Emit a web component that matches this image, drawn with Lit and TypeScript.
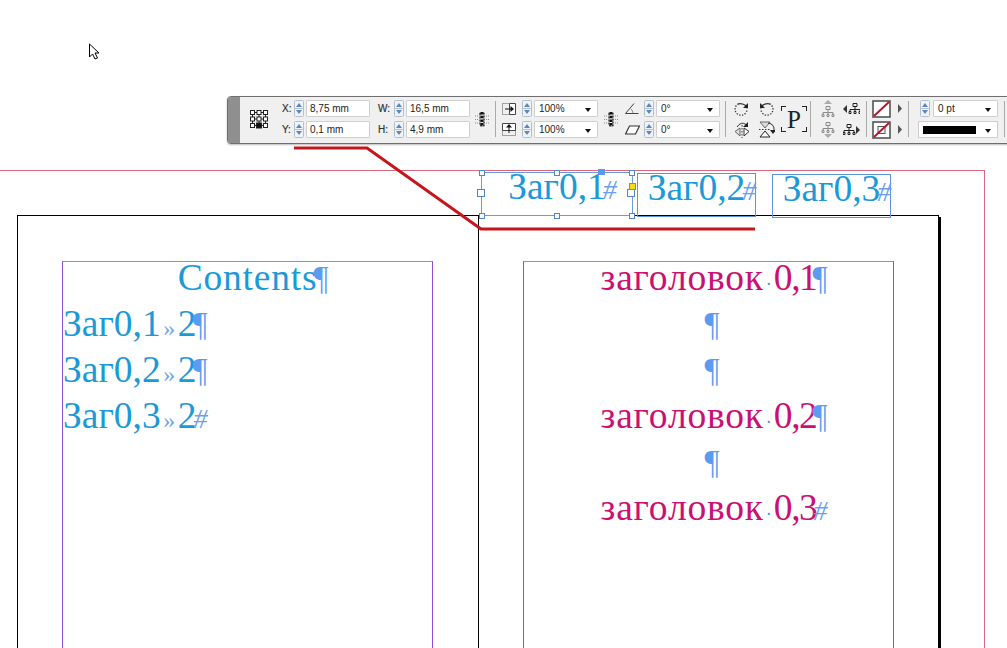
import { LitElement, html, css, svg } from "lit";
import { customElement } from "lit/decorators.js";

const spinner = html`<svg class="spin" width="10" height="17" viewBox="0 0 10 17">
  <rect x=".5" y=".5" width="9" height="16" rx="1" fill="#f0f3f8" stroke="#b4bfcc"/>
  <path d="M.5 8.500h9" stroke="#b4bfcc"/>
  <path d="M5 3 8 7H2z" fill="#5d86bd"/><path d="M5 14 2 10h6z" fill="#5d86bd"/>
</svg>`;

const chain = html`<svg width="14" height="15" viewBox="0 0 14 15">
  <path d="M5 1.500h4v12H5z" fill="none" stroke="#444" stroke-width="1.500" stroke-dasharray="2 1"/>
  <path d="M7 0v15" stroke="#111" stroke-width="3" stroke-dasharray="2.500 1.200"/>
  <path d="M0 4h3M11 4h3M0 7.500h3M11 7.500h3M0 11h3M11 11h3" stroke="#888" stroke-dasharray="1 1"/>
</svg>`;

const num = (v: string) => html`<div class="field">${spinner}<div class="input">${v}</div></div>`;
const sel = (v: string) => html`<div class="field">${spinner}<div class="input select">${v}<i class="tri"></i></div></div>`;

const rotate = (flip: boolean) => html`<svg width="15" height="16" viewBox="0 0 15 16">
  <g transform=${flip ? "matrix(-1 0 0 1 15 0)" : ""}>
    <path d="M4.500 2.800A6 6 0 1 0 13 7.500" fill="none" stroke="#333" stroke-width="1.300" stroke-dasharray="1.300 1.500"/>
    <path d="M4 3Q8 1.500 12.500 5" fill="none" stroke="#333" stroke-width="1.300"/>
    <path d="M14 2v5h-5z" fill="#222"/>
  </g>
</svg>`;

const flipH = html`<svg width="16" height="17" viewBox="0 0 16 17">
  <path d="M1 9.500 6 6v8z" fill="#ddd" stroke="#666" transform="translate(0 1)"/>
  <path d="M15 9.500 10 6v8z" fill="#fff" stroke="#333" transform="translate(0 1)"/>
  <path d="M8 4v13" stroke="#333" stroke-dasharray="1.500 1.500"/>
  <path d="M3 6Q7 0 12 3.500" fill="none" stroke="#333"/>
  <path d="M14 1v5H9z" fill="#222"/>
</svg>`;

const flipV = html`<svg width="16" height="17" viewBox="0 0 16 17">
  <path d="M1 1h10L6 7z" fill="#ddd" stroke="#666"/>
  <path d="M1 16h10L6 10z" fill="#fff" stroke="#222"/>
  <path d="M0 8.500h12" stroke="#333" stroke-dasharray="1.500 1.500"/>
  <path d="M9 2Q16 3 15 10" fill="none" stroke="#333"/>
  <path d="M11 9h6l-3 4z" fill="#222"/>
</svg>`;

const tree = (arrow: string, grey: boolean) => {
  const c = grey ? "#8a8a8a" : "#222";
  const a = {
    up: svg`<path d="M8 0 12 4H4z" fill="#aaa"/>`,
    down: svg`<path d="M8 17 4 13h8z" fill="#aaa"/>`,
    left: svg`<path d="M0 9l4-4v8z" fill="#333"/>`,
    right: svg`<path d="M17 9l-4-4v8z" fill="#333"/>`,
  }[arrow];
  const dx = arrow === "left" ? 4.5 : arrow === "right" ? -1.5 : 0.5;
  const dy = arrow === "up" ? 3 : arrow === "down" ? -2 : 0;
  return html`<svg width="17" height="17" viewBox="0 0 17 17">
    ${a}
    <g transform="translate(${dx} ${dy})" fill="none" stroke=${c}>
      <path d="M5.500 3.500h4v3h-4zM7.500 6.500v3M2.500 9.500h10M2.500 9.500v2M7.500 9.500v2M12.500 9.500v2"/>
      <path d="M1.500 11.500h2v2h-2zM6.500 11.500h2v2h-2zM11.500 11.500h2v2h-2z"/>
    </g>
  </svg>`;
};

const strokeBox = (inner: boolean) => html`<svg width="19" height="18" viewBox="0 0 19 18">
  <rect x="1" y="1" width="17" height="16" fill="#fff" stroke="#555" stroke-width="1.600"/>
  ${inner ? svg`<rect x="6" y="5.500" width="7" height="7" fill="none" stroke="#555"/>` : ""}
  <path d="M2 16 17 2" stroke="#b5182a" stroke-width="2"/>
</svg>`;

const flyout = html`<svg class="fly" width="6" height="9" viewBox="0 0 6 9"><path d="M1 0l4 4.500-4 4.500z" fill="#555"/></svg>`;

const P = () => html`<span class="mark pil">¶</span>`;
const H = () => html`<span class="mark hash">#</span>`;
const Tab = () => html`<span class="tab">»</span>`;
const Dot = () => html`<span class="dot">·</span>`;
const Num = (v: string) => html`<span class="nar">${v}</span>`;

@customElement("app-root")
export class AppRoot extends LitElement {
  static styles = css`
    :host { display: block; }
    .canvas { position: relative; width: 1007px; height: 648px; overflow: hidden; background: #fff;
      font-family: "Liberation Serif", serif; }
    .abs { position: absolute; box-sizing: border-box; }
    .bleed { left: -10px; top: 170px; width: 995px; height: 600px; border: 1px solid #d9697c; }
    .page { left: 17px; top: 215px; width: 922px; height: 600px; border: 1px solid #000; }
    .shadow { left: 938px; top: 217px; width: 3px; height: 500px; background: #000; }
    .spine { left: 478px; top: 215px; width: 1px; height: 500px; background: #000; }
    .margin { top: 261px; width: 371px; height: 500px; border: 1px solid #8f4fd6; border-top-color: #d765d2; }
    .m1 { left: 62px; } .m2 { left: 523px; }
    .story { font-size: 37.5px; line-height: 46px; color: #1a9ad8; margin-top: -7px; white-space: nowrap; }
    .story > div { height: 46px; }
    .story.pink { color: #cc0f72; }
    .c { text-align: center; }
    .wide { letter-spacing: 0.8px; }
    .nar { letter-spacing: -1.4px; }
    .mark { display: inline-block; width: 0; line-height: 0; color: #5a9cf2; }
    .pil { font-size: 33px; transform: translate(-4px, -1px); }
    .hash { font-size: 28px; font-style: italic; transform: translateX(-3px); color: #6a9ff0; }
    .tab { font-size: 24px; line-height: 0; color: #6fa6ea; display: inline-block; width: 17px; text-align: center; }
    .dot { font-size: 18px; line-height: 0; color: #3a9ad8; display: inline-block; width: 10px; text-align: center; }

    .frame { font-size: 37.5px; line-height: 44px; color: #1a9ad8; text-align: center; white-space: nowrap;
      border: 1px solid #5b96dc; }
    .frame > .inner { margin-top: -8px; }
    .f1 { left: 481px; top: 172px; width: 152px; height: 44px; border-color: #6d9ad8; }
    .f2 { left: 637px; top: 173px; width: 119px; height: 44px; }
    .f3 { left: 772px; top: 174px; width: 119px; height: 44px; }
    .h { width: 6px; height: 6px; background: #fff; border: 1px solid #4f86cf; box-sizing: border-box; }
    .h.big { width: 8px; height: 8px; }
    .out { left: 629px; top: 183px; width: 7px; height: 7px; background: #f4dc1e; border: 1px solid #5f8fd0; }
    .center { left: 598px; top: 169px; width: 7px; height: 6px; background: #5b96f0; border: 0; }
    .red { left: 0; top: 0; }

    .cursor { left: 88px; top: 43px; }

    .toolbar { left: 227px; top: 96px; width: 784px; height: 48px; display: flex; align-items: center;
      background: #f0f0f0; border: 1px solid #6e6e6e; border-radius: 4px; overflow: hidden;
      font: 10px "Liberation Sans", sans-serif; color: #222; box-shadow: 0 1px 2px #bbb; }
    .grip { width: 12px; align-self: stretch; background: #8f8f8f; flex: none; }
    .col { display: grid; grid-template-rows: 17px 17px; row-gap: 4px; flex: none; align-items: center; justify-items: center; margin-top: -2px; }
    .field { display: flex; align-items: center; gap: 2px; }
    .spin { display: block; flex: none; }
    .input { box-sizing: border-box; height: 17px; width: 64px; background: #fff; border: 1px solid #cfcfcf;
      border-radius: 1px; padding-left: 3px; line-height: 15px; font-size: 10px; position: relative; }
    .select { padding-left: 4px; }
    .tri { position: absolute; right: 6px; top: 7px; width: 0; height: 0; border: 3.500px solid transparent;
      border-top: 4px solid #111; border-bottom: 0; }
    .sep { width: 1px; height: 36px; background: #aaa; flex: none; margin-top: -2px; }
    .lab { font-size: 10px; color: #333; justify-self: start; font-weight: 400; -webkit-text-stroke: 0.2px #333; }
    .ref { margin-left: 9px; display: block; flex: none; margin-top: -2px; }
    .g-l1 { margin-left: 13px; width: 11px; }
    .g-f1 { margin-left: 1px; }
    .g-l2 { margin-left: 8px; width: 15px; }
    .g-f2 { margin-left: 1px; }
    .g-ch { margin-left: 5px; display: flex; flex: none; margin-top: -2px; }
    .s1 { margin-left: 6px; }
    .g-sc { margin-left: 5px; width: 16px; }
    .g-f3 { margin-left: 5px; }
    .g-ch2 { margin-left: 6px; display: flex; flex: none; margin-top: -2px; }
    .g-an { margin-left: 6px; width: 16px; }
    .g-f4 { margin-left: 4px; }
    .s2 { margin-left: 5px; }
    .g-r1 { margin-left: 7px; width: 17px; }
    .g-r2 { margin-left: 8px; width: 17px; }
    .para { margin-left: 6px; width: 26px; height: 26px; flex: none; display: grid; place-items: center; position: relative;
      font: 25px "Liberation Serif", serif; color: #222; margin-top: -2px; }
    .br { position: absolute; width: 4px; height: 4px; border: 0 solid #222; }
    .br.a { left: 0; top: 0; border-width: 1px 0 0 1px; } .br.b { right: 0; top: 0; border-width: 1px 1px 0 0; }
    .br.c1 { left: 0; bottom: 0; border-width: 0 0 1px 1px; } .br.d { right: 0; bottom: 0; border-width: 0 1px 1px 0; }
    .s3 { margin-left: 3px; }
    .g-t1 { margin-left: 9px; width: 17px; }
    .g-t2 { margin-left: 6px; width: 17px; }
    .s4 { margin-left: 6px; }
    .g-st { margin-left: 5px; width: 19px; }
    .g-fl { margin-left: 6px; width: 6px; }
    .s5 { margin-left: 5px; }
    .g-wt { margin-left: 9px; justify-items: end; }
    .g-wt .field { gap: 3px; }
    .g-wt .input { width: 65px; }
    .stroke { box-sizing: border-box; height: 17px; width: 80px; background: #fff; border: 1px solid #cfcfcf; position: relative;
      padding: 4px 21px 4px 4px; }
    .stroke b { display: block; height: 8px; background: #000; }
    .s6 { margin-left: 6px; }
  `;

  render() {
    return html`<div class="canvas">
      <div class="abs bleed"></div>
      <div class="abs page"></div>
      <div class="abs shadow"></div>
      <div class="abs spine"></div>

      <div class="abs margin m1"><div class="story">
        <div class="c"><span class="wide">Contents</span>${P()}</div>
        <div>Заг0,1${Tab()}2${P()}</div>
        <div>Заг0,2${Tab()}2${P()}</div>
        <div>Заг0,3${Tab()}2${H()}</div>
      </div></div>
      <div class="abs margin m2"><div class="story pink c">
        <div><span class="wide">заголовок</span>${Dot()}${Num("0,1")}${P()}</div>
        <div>${P()}</div>
        <div>${P()}</div>
        <div><span class="wide">заголовок</span>${Dot()}${Num("0,2")}${P()}</div>
        <div>${P()}</div>
        <div><span class="wide">заголовок</span>${Dot()}${Num("0,3")}${H()}</div>
      </div></div>

      <div class="abs frame f1"><div class="inner">Заг0,1${H()}</div></div>
      <div class="abs frame f2"><div class="inner">Заг0,2${H()}</div></div>
      <div class="abs frame f3"><div class="inner">Заг0,3${H()}</div></div>
      ${[[479,170],[554,170],[629,170],[479,213],[554,213],[629,213]].map(
        ([x, y]) => html`<div class="abs h" style="left:${x}px;top:${y}px"></div>`)}
      ${[[477,189],[627,189]].map(
        ([x, y]) => html`<div class="abs h big" style="left:${x}px;top:${y}px"></div>`)}
      <div class="abs out"></div>
      <div class="abs center"></div>

      <svg class="abs red" width="1007" height="648" viewBox="0 0 1007 648">
        <path d="M294 148H367L481 229H755" fill="none" stroke="#c4161c" stroke-width="3"/>
      </svg>

      <svg class="abs cursor" width="13" height="18" viewBox="0 0 13 18">
        <path d="M1.500 1v13l3-3 2.500 5 2.500-1-2.500-5h4z" fill="#fff" stroke="#000"/>
      </svg>

      <div class="abs toolbar">
        <div class="grip"></div>
        <svg class="ref" width="20" height="20" viewBox="0 0 20 20">
          <g fill="#fff" stroke="#222">
            <rect x="1.500" y="1.500" width="4" height="4"/><rect x="8" y="1.500" width="4" height="4"/><rect x="14.500" y="1.500" width="4" height="4"/>
            <rect x="1.500" y="8" width="4" height="4"/><rect x="8" y="8" width="4" height="4"/><rect x="14.500" y="8" width="4" height="4"/>
            <rect x="1.500" y="14.500" width="4" height="4"/><rect x="7.500" y="14" width="5" height="5" fill="#111"/><rect x="14.500" y="14.500" width="4" height="4"/>
          </g>
          <path d="M5.500 3.500h2.500M12 3.500h2.500M5.500 10h2.500M12 10h2.500M5.500 16.500h2M12.500 16.500h2M3.500 5.500v2.500M3.500 12v2.500M10 5.500v2.500M10 12v2M16.500 5.500v2.500M16.500 12v2.500" stroke="#222"/>
        </svg>
        <div class="col g-l1"><span class="lab">X:</span><span class="lab">Y:</span></div>
        <div class="col g-f1">${num("8,75 mm")}${num("0,1 mm")}</div>
        <div class="col g-l2"><span class="lab">W:</span><span class="lab">H:</span></div>
        <div class="col g-f2">${num("16,5 mm")}${num("4,9 mm")}</div>
        <div class="g-ch">${chain}</div>
        <div class="sep s1"></div>
        <div class="col g-sc">
          <svg width="14" height="12" viewBox="0 0 14 12"><path d="M7.500 .5H.5v11h7" stroke="#555" stroke-dasharray="1 1" fill="none"/><path d="M7.500 .5h6v11h-6z" fill="#fff" stroke="#444"/><path d="M3 6h6" stroke="#111"/><path d="M12 6 8.500 3v6z" fill="#111"/></svg>
          <svg width="14" height="13" viewBox="0 0 14 13"><path d="M.5 7.500v5h13v-5" stroke="#555" stroke-dasharray="1 1" fill="none"/><path d="M.5 .5h13v7H.5z" fill="#fff" stroke="#444"/><path d="M7 10V3" stroke="#111"/><path d="M7 1 4 4.500h6z" fill="#111"/></svg>
        </div>
        <div class="col g-f3">${sel("100%")}${sel("100%")}</div>
        <div class="g-ch2">${chain}</div>
        <div class="col g-an">
          <svg width="14" height="13" viewBox="0 0 14 13"><path d="M.5 11.500h13M.5 11.500 9 1.500" fill="none" stroke="#444"/><path d="M6 7a6 6 0 0 1 2 4.500" fill="none" stroke="#888"/></svg>
          <svg width="15" height="10" viewBox="0 0 15 10"><path d="M4.500 1h10l-4 8H.5z" fill="#fff" stroke="#333" stroke-width="1.200"/></svg>
        </div>
        <div class="col g-f4">${sel("0°")}${sel("0°")}</div>
        <div class="sep s2"></div>
        <div class="col g-r1">${rotate(false)}${flipH}</div>
        <div class="col g-r2">${rotate(true)}${flipV}</div>
        <div class="para"><i class="br a"></i><i class="br b"></i><i class="br c1"></i><i class="br d"></i>P</div>
        <div class="sep s3"></div>
        <div class="col g-t1">${tree("up", true)}${tree("down", true)}</div>
        <div class="col g-t2">${tree("left", false)}${tree("right", false)}</div>
        <div class="sep s4"></div>
        <div class="col g-st">${strokeBox(false)}${strokeBox(true)}</div>
        <div class="col g-fl">${flyout}${flyout}</div>
        <div class="sep s5"></div>
        <div class="col g-wt">
          ${sel("0 pt")}
          <div class="stroke"><b></b><i class="tri"></i></div>
        </div>
        <div class="sep s6"></div>
      </div>
    </div>`;
  }
}
